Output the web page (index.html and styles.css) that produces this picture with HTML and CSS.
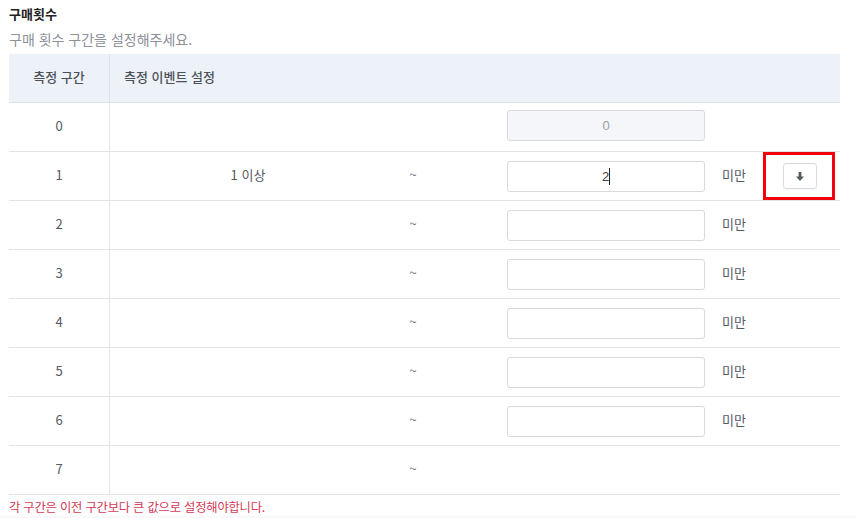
FILE: index.html
```html
<!DOCTYPE html>
<html lang="ko">
<head>
<meta charset="utf-8">
<link rel="stylesheet" href="styles.css">
</head>
<body>
<div class="wrap">
  <div class="title">구매횟수</div>
  <div class="desc">구매 횟수 구간을 설정해주세요.</div>
  <div class="table">
    <div class="row head">
      <div class="c1">측정 구간</div>
      <div class="c2 head-text">측정 이벤트 설정</div>
    </div>
    <div class="row">
      <div class="c1">0</div>
      <div class="c2">
        <div class="from"></div><div class="tilde"></div>
        <div class="input disabled">0</div>
      </div>
    </div>
    <div class="row">
      <div class="c1">1</div>
      <div class="c2">
        <div class="from">1 이상</div><div class="tilde">~</div>
        <div class="input">2<span class="caret"></span></div>
        <div class="unit">미만</div>
        <div class="action">
          <button class="btn" type="button"><svg width="8" height="9" viewBox="0 0 8 9"><path d="M2.6 0h2.8v4.5H8L4 9 0 4.5h2.6z" fill="#555b63"/></svg></button>
          <span class="mark"></span>
        </div>
      </div>
    </div>
    <div class="row">
      <div class="c1">2</div>
      <div class="c2"><div class="from"></div><div class="tilde">~</div><div class="input"></div><div class="unit">미만</div></div>
    </div>
    <div class="row">
      <div class="c1">3</div>
      <div class="c2"><div class="from"></div><div class="tilde">~</div><div class="input"></div><div class="unit">미만</div></div>
    </div>
    <div class="row">
      <div class="c1">4</div>
      <div class="c2"><div class="from"></div><div class="tilde">~</div><div class="input"></div><div class="unit">미만</div></div>
    </div>
    <div class="row">
      <div class="c1">5</div>
      <div class="c2"><div class="from"></div><div class="tilde">~</div><div class="input"></div><div class="unit">미만</div></div>
    </div>
    <div class="row">
      <div class="c1">6</div>
      <div class="c2"><div class="from"></div><div class="tilde">~</div><div class="input"></div><div class="unit">미만</div></div>
    </div>
    <div class="row">
      <div class="c1">7</div>
      <div class="c2"><div class="from"></div><div class="tilde">~</div></div>
    </div>
  </div>
  <div class="error">각 구간은 이전 구간보다 큰 값으로 설정해야합니다.</div>
</div>
<div class="fade"></div>
</body>
</html>
```

FILE: styles.css
```css
html, body {
  margin: 0;
  padding: 0;
  background: #fff;
}
body {
  font-family: "Noto Sans CJK KR", "Noto Sans", sans-serif;
  font-size: 13px;
  color: #555a62;
}
.wrap {
  padding: 4px 16px 0 9px;
  width: 831px;
}
.title {
  font-weight: 700;
  color: #222;
  line-height: 20px;
}
.desc {
  margin-top: 5px;
  line-height: 20px;
  color: #8b9099;
  font-size: 14px;
}
.table {
  margin-top: 5px;
}
.row {
  display: flex;
  height: 48px;
  border-bottom: 1px solid #e2e4e8;
  align-items: stretch;
}
.row.head {
  background: #edf1f8;
  border-bottom-color: #dce2ea;
  color: #4c5159;
  font-weight: 500;
}
.c1 {
  width: 101px;
  flex: none;
  border-right: 1px solid #e2e4e8;
  display: flex;
  align-items: center;
  justify-content: center;
  padding-bottom: 4px;
  box-sizing: border-box;
}
.c2 {
  flex: 1;
  display: flex;
  align-items: center;
}
.head-text {
  padding-left: 14px;
  padding-bottom: 3px;
}
.from {
  width: 276px;
  flex: none;
  text-align: center;
  padding-bottom: 4px;
}
.tilde {
  width: 54px;
  flex: none;
  text-align: center;
  color: #6b7079;
  padding-bottom: 4px;
}
.input {
  margin-left: 67px;
  width: 196px;
  height: 29px;
  border: 1px solid #d6dae0;
  border-radius: 3px;
  background: #fff;
  display: flex;
  align-items: center;
  justify-content: center;
  color: #444;
  font-family: "Liberation Sans", "Noto Sans CJK KR", sans-serif;
  font-size: 13px;
}
.input.disabled {
  background: #f4f6f9;
  color: #9ba0a8;
  margin-top: -3px;
}
.caret {
  width: 1px;
  height: 17px;
  background: #222;
}
.unit {
  margin-left: 17px;
  width: 24px;
  white-space: nowrap;
  padding-bottom: 4px;
}
.action {
  position: relative;
  margin-left: 37px;
  display: flex;
}
.btn {
  width: 34px;
  height: 26px;
  padding: 0;
  border: 1px solid #d6dae0;
  border-radius: 3px;
  background: #fff;
  display: flex;
  align-items: center;
  justify-content: center;
  box-shadow: 0 1px 1px rgba(0,0,0,0.03);
}
.mark {
  position: absolute;
  left: -20px;
  top: -11px;
  width: 66px;
  height: 42px;
  border: 3px solid #f2000c;
  pointer-events: none;
}
.error {
  color: #d33a57;
  font-size: 12.3px;
  line-height: 18px;
  margin-top: 3px;
  letter-spacing: -0.2px;
}
.fade {
  height: 6px;
  margin-top: -1px;
  background: linear-gradient(#ffffff, #eeeeee);
}
```
